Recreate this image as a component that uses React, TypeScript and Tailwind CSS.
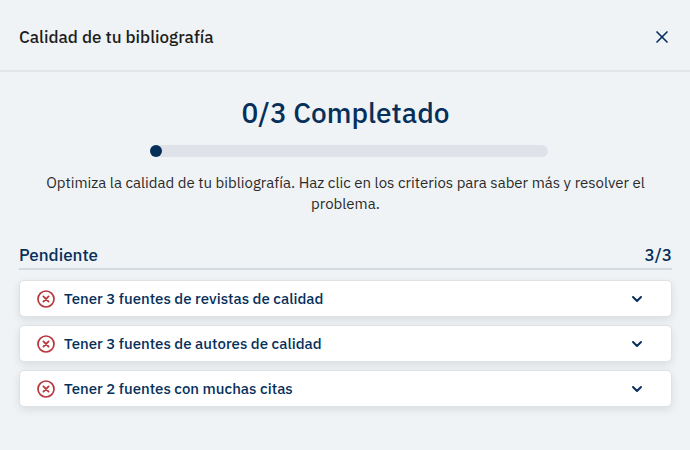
import { ChevronDown, X } from "lucide-react";

const CRITERIA = [
  { id: "journals", label: "Tener 3 fuentes de revistas de calidad" },
  { id: "authors", label: "Tener 3 fuentes de autores de calidad" },
  { id: "citations", label: "Tener 2 fuentes con muchas citas" },
];

function FailedIcon() {
  return (
    <svg viewBox="0 0 18 18" fill="none" className="size-[18px] shrink-0" aria-hidden="true">
      <circle cx="9" cy="9" r="8" stroke="#b9373c" strokeWidth="1.7" />
      <path
        d="M6.4 6.4l5.2 5.2M11.6 6.4l-5.2 5.2"
        stroke="#b9373c"
        strokeWidth="1.8"
        strokeLinecap="round"
      />
    </svg>
  );
}

export default function App() {
  return (
    <main className="min-h-screen bg-[#eff3f6] font-['IBM_Plex_Sans','Roboto',sans-serif] text-[#06305a]">
      <header className="flex items-center justify-between border-b-2 border-[#e1e5e8] pt-6 pr-[18px] pb-5 pl-[19px]">
        <h1 className="text-[17px] leading-[26px] font-medium text-[#1d1d1b]">
          Calidad de tu bibliografía
        </h1>
        <button type="button" aria-label="Cerrar">
          <X className="size-5" strokeWidth={2} />
        </button>
      </header>

      <section className="pt-6 pr-[18px] pl-[19px] text-center">
        <h2 className="text-[28px] leading-[34px] font-medium">0/3 Completado</h2>
        <div
          role="progressbar"
          aria-label="Criterios completados"
          aria-valuemin={0}
          aria-valuemax={3}
          aria-valuenow={0}
          className="mt-[15px] ml-[20%] h-3 w-[61%] rounded-full bg-[#dfe3e9]"
        >
          <div className="size-3 rounded-full bg-[#06305a]" />
        </div>
        <p className="mt-[15px] px-6 text-[15px] leading-[21px] text-[#2b2b2a]">
          Optimiza la calidad de tu bibliografía. Haz clic en los criterios para saber más y
          resolver el problema.
        </p>
      </section>

      <section className="pt-7 pr-[18px] pb-10 pl-[19px]">
        <div className="flex items-center justify-between border-b-2 border-[#d5dae0] text-[17px] leading-[26px] font-medium">
          <h3>Pendiente</h3>
          <span>3/3</span>
        </div>
        <ul className="mt-[10px] grid gap-2">
          {CRITERIA.map((item) => (
            <li key={item.id}>
              <button
                type="button"
                aria-expanded={false}
                className="flex w-full items-center gap-[9px] rounded-[5px] border border-[#dfe2e5] bg-white py-2 pr-[26px] pl-[17px] text-left text-[15px] leading-[19px] font-medium shadow-[0_3px_8px_rgba(0,0,0,0.09)]"
              >
                <FailedIcon />
                <span className="flex-1">{item.label}</span>
                <ChevronDown className="size-4" strokeWidth={3} />
              </button>
            </li>
          ))}
        </ul>
      </section>
    </main>
  );
}
